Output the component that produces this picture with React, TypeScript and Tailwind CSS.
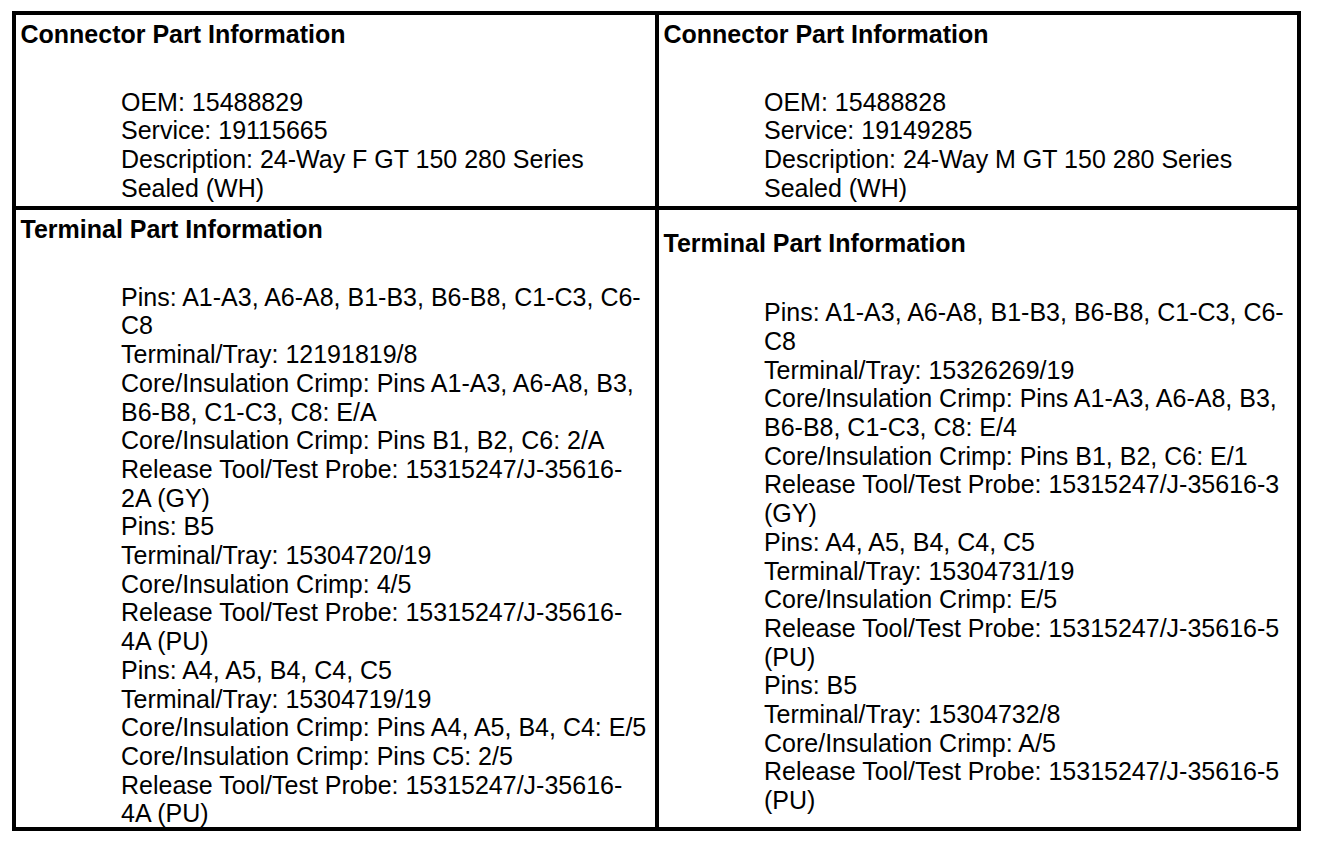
// Connector / terminal part information sheet
const connectorLeft = [
  ["OEM: 15488829"],
  ["Service: 19115665"],
  ["Description: 24-Way F GT 150 280 Series", "Sealed (WH)"],
];

const connectorRight = [
  ["OEM: 15488828"],
  ["Service: 19149285"],
  ["Description: 24-Way M GT 150 280 Series", "Sealed (WH)"],
];

const terminalLeft = [
  ["Pins: A1-A3, A6-A8, B1-B3, B6-B8, C1-C3, C6-", "C8"],
  ["Terminal/Tray: 12191819/8"],
  ["Core/Insulation Crimp: Pins A1-A3, A6-A8, B3,", "B6-B8, C1-C3, C8: E/A"],
  ["Core/Insulation Crimp: Pins B1, B2, C6: 2/A"],
  ["Release Tool/Test Probe: 15315247/J-35616-", "2A (GY)"],
  ["Pins: B5"],
  ["Terminal/Tray: 15304720/19"],
  ["Core/Insulation Crimp: 4/5"],
  ["Release Tool/Test Probe: 15315247/J-35616-", "4A (PU)"],
  ["Pins: A4, A5, B4, C4, C5"],
  ["Terminal/Tray: 15304719/19"],
  ["Core/Insulation Crimp: Pins A4, A5, B4, C4: E/5"],
  ["Core/Insulation Crimp: Pins C5: 2/5"],
  ["Release Tool/Test Probe: 15315247/J-35616-", "4A (PU)"],
];

const terminalRight = [
  ["Pins: A1-A3, A6-A8, B1-B3, B6-B8, C1-C3, C6-", "C8"],
  ["Terminal/Tray: 15326269/19"],
  ["Core/Insulation Crimp: Pins A1-A3, A6-A8, B3,", "B6-B8, C1-C3, C8: E/4"],
  ["Core/Insulation Crimp: Pins B1, B2, C6: E/1"],
  ["Release Tool/Test Probe: 15315247/J-35616-3", "(GY)"],
  ["Pins: A4, A5, B4, C4, C5"],
  ["Terminal/Tray: 15304731/19"],
  ["Core/Insulation Crimp: E/5"],
  ["Release Tool/Test Probe: 15315247/J-35616-5", "(PU)"],
  ["Pins: B5"],
  ["Terminal/Tray: 15304732/8"],
  ["Core/Insulation Crimp: A/5"],
  ["Release Tool/Test Probe: 15315247/J-35616-5", "(PU)"],
];

function Lines({ items }: { items: string[][] }) {
  return (
    <div className="pl-[105px]">
      {items.map((p, i) => (
        <p key={i} className="whitespace-nowrap">
          {p.map((line, j) => (
            <span key={j} className="block">
              {line}
            </span>
          ))}
        </p>
      ))}
    </div>
  );
}

export default function App() {
  return (
    <div
      className="w-[1328px] h-[850px] bg-white text-black pt-[11px] pl-[12px] text-[25px] leading-[28.7px]"
      style={{ fontFamily: '"Liberation Sans", Arial, sans-serif' }}
    >
      <div className="w-[1289px] border-4 border-black box-border">
        {/* Connector row */}
        <div className="flex h-[191px]">
          <div className="w-[639px] pt-[5px] pl-[4.5px]">
            <h2 className="font-bold">Connector Part Information</h2>
            <div className="mt-[39px] -ml-[4.5px]">
              <Lines items={connectorLeft} />
            </div>
          </div>
          <div className="w-[4px] bg-black" />
          <div className="flex-1 pt-[5px] pl-[4.5px]">
            <h2 className="font-bold">Connector Part Information</h2>
            <div className="mt-[39px] -ml-[4.5px]">
              <Lines items={connectorRight} />
            </div>
          </div>
        </div>

        <div className="h-[4px] bg-black" />

        {/* Terminal row */}
        <div className="flex h-[617px]">
          <div className="w-[639px] pt-[5px] pl-[4.5px]">
            <h2 className="font-bold">Terminal Part Information</h2>
            <div className="mt-[39px] -ml-[4.5px]">
              <Lines items={terminalLeft} />
            </div>
          </div>
          <div className="w-[4px] bg-black" />
          <div className="flex-1 pt-[18.5px] pl-[4.5px]">
            <h2 className="font-bold">Terminal Part Information</h2>
            <div className="mt-[41px] -ml-[4.5px]">
              <Lines items={terminalRight} />
            </div>
          </div>
        </div>
      </div>
    </div>
  );
}
